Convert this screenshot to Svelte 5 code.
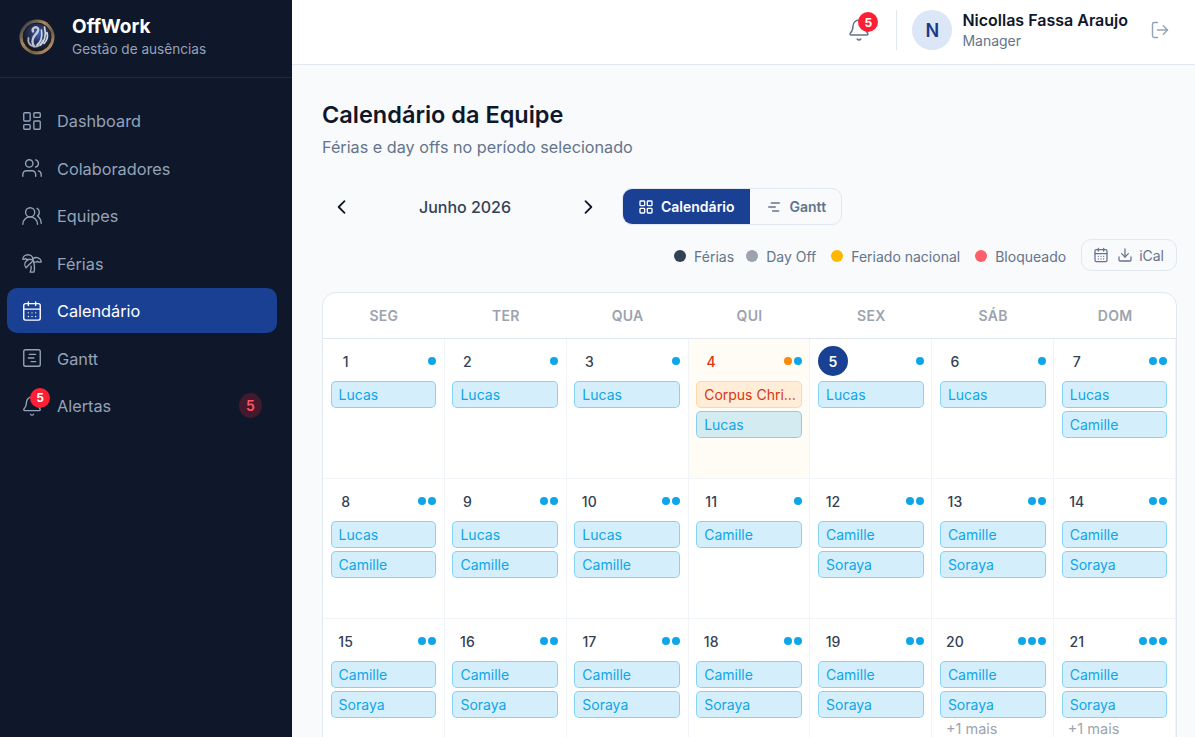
<script>
  const nav = [
    { k: 'grid', t: 'Dashboard' },
    { k: 'users', t: 'Colaboradores' },
    { k: 'team', t: 'Equipes' },
    { k: 'palm', t: 'Férias' },
    { k: 'cal', t: 'Calendário', active: true },
    { k: 'gantt', t: 'Gantt' },
    { k: 'bell', t: 'Alertas', badge: 5 }
  ];
  const heads = ['SEG', 'TER', 'QUA', 'QUI', 'SEX', 'SÁB', 'DOM'];
  const L = 'Lucas', C = 'Camille', S = 'Soraya';
  const days = [
    { n: 1, p: [L] }, { n: 2, p: [L] }, { n: 3, p: [L] },
    { n: 4, p: [L], holiday: 'Corpus Christi' },
    { n: 5, p: [L], today: true }, { n: 6, p: [L] }, { n: 7, p: [L, C] },
    { n: 8, p: [L, C] }, { n: 9, p: [L, C] }, { n: 10, p: [L, C] }, { n: 11, p: [C] },
    { n: 12, p: [C, S] }, { n: 13, p: [C, S] }, { n: 14, p: [C, S] },
    { n: 15, p: [C, S] }, { n: 16, p: [C, S] }, { n: 17, p: [C, S] }, { n: 18, p: [C, S] },
    { n: 19, p: [C, S] }, { n: 20, p: [C, S], more: 1 }, { n: 21, p: [C, S], more: 1 }
  ];
</script>

{#snippet icon(k)}
  <svg class="ic" viewBox="0 0 24 24" fill="none" stroke="currentColor" stroke-linecap="round" stroke-linejoin="round">
    {#if k === 'grid'}
      <rect x="3" y="3" width="7" height="9" rx="1" /><rect x="14" y="3" width="7" height="5" rx="1" /><rect x="14" y="12" width="7" height="9" rx="1" /><rect x="3" y="16" width="7" height="5" rx="1" />
    {:else if k === 'grid4'}
      <rect x="3" y="3" width="7" height="7" rx="1" /><rect x="14" y="3" width="7" height="7" rx="1" /><rect x="14" y="14" width="7" height="7" rx="1" /><rect x="3" y="14" width="7" height="7" rx="1" />
    {:else if k === 'users'}
      <path d="M16 21v-2a4 4 0 0 0-4-4H6a4 4 0 0 0-4 4v2" /><circle cx="9" cy="7" r="4" /><path d="M22 21v-2a4 4 0 0 0-3-3.870" /><path d="M16 3.130a4 4 0 0 1 0 7.750" />
    {:else if k === 'team'}
      <path d="M18 21a8 8 0 0 0-16 0" /><circle cx="10" cy="8" r="5" /><path d="M22 20c0-3.370-2-6.500-4-8a5 5 0 0 0-.450-8.300" />
    {:else if k === 'palm'}
      <path d="M13 8c0-2.760-2.460-5-5.500-5S2 5.240 2 8h2l1-1 1 1h4" /><path d="M13 7.140A5.820 5.820 0 0 1 16.500 6c3.040 0 5.500 2.240 5.500 5h-3l-1-1-1 1h-3" /><path d="M5.890 9.710c-2.150 2.150-2.300 5.470-.350 7.430l4.240-4.250.700-.700.710-.710 2.120-2.120c-1.950-1.960-5.270-1.800-7.420.350" /><path d="M11 15.500c.500 2.500-.170 4.500-1 6.500h4c2-5.500-.500-12-1-14" />
    {:else if k === 'cal'}
      <path d="M8 2v4M16 2v4" /><rect x="3" y="4" width="18" height="18" rx="2" /><path d="M3 10h18" /><path d="M8 14h.010M12 14h.010M16 14h.010M8 18h.010M12 18h.010M16 18h.010" />
    {:else if k === 'gantt'}
      <rect x="3" y="3" width="18" height="18" rx="2" /><path d="M9 8h7M8 12h6M11 16h5" />
    {:else if k === 'bell'}
      <path d="M10.268 21a2 2 0 0 0 3.464 0" /><path d="M3.262 15.326A1 1 0 0 0 4 17h16a1 1 0 0 0 .740-1.673C19.410 13.956 18 12.499 18 8A6 6 0 0 0 6 8c0 4.499-1.411 5.956-2.738 7.326" />
    {:else if k === 'logout'}
      <path d="M16 17l5-5-5-5" /><path d="M21 12H9" /><path d="M9 21H5a2 2 0 0 1-2-2V5a2 2 0 0 1 2-2h4" />
    {:else if k === 'lines'}
      <path d="M8 6h12M4 12h10M10 18h9" />
    {:else if k === 'download'}
      <path d="M12 15V3" /><path d="M21 15v4a2 2 0 0 1-2 2H5a2 2 0 0 1-2-2v-4" /><path d="M7 10l5 5 5-5" />
    {/if}
  </svg>
{/snippet}

<div class="app">
  <aside class="side">
    <div class="brand">
      <svg class="logo" viewBox="0 0 36 36">
        <defs>
          <radialGradient id="lg" cx="55%" cy="38%" r="58%">
            <stop offset="0" stop-color="#3a5cc0" /><stop offset="0.5" stop-color="#25355f" /><stop offset="1" stop-color="#17181f" />
          </radialGradient>
          <linearGradient id="rg" x1="0.1" y1="0.2" x2="0.8" y2="0.9">
            <stop offset="0" stop-color="#45464c" /><stop offset="0.35" stop-color="#a88a60" /><stop offset="0.7" stop-color="#6f5c46" /><stop offset="1" stop-color="#b3905f" />
          </linearGradient>
          <filter id="soft" x="-10%" y="-10%" width="120%" height="120%"><feGaussianBlur stdDeviation="0.500" /></filter>
        </defs>
        <g filter="url(#soft)">
          <circle cx="18" cy="18" r="17.500" fill="url(#rg)" />
          <circle cx="18" cy="18" r="14" fill="url(#lg)" stroke="#1c1a1c" />
          <path d="M14 12.500c-1.500-3.500 3-5.500 5-3 1.500 2.500-2 5-4 8-2 3-2 7 0 9.500" fill="none" stroke="#c4c8d4" stroke-width="2.400" stroke-linecap="round" />
          <path d="M9.500 19c-1 4 1 8 5.500 8.500 4 .5 7.500-2 8.500-6" fill="none" stroke="#aeb3c4" stroke-width="1.800" stroke-linecap="round" />
          <path d="M18 26c4-3 5.500-8 4.500-15M21.500 26c4-3 6-10 4-18M25 24.500c3-3 4-7 3-11" fill="none" stroke="#d4d7e0" stroke-width="1.700" stroke-linecap="round" />
        </g>
      </svg>
      <div>
        <div class="bname">OffWork</div>
        <div class="bsub">Gestão de ausências</div>
      </div>
    </div>
    <nav class="nav">
      {#each nav as n}
        <div class="item" class:active={n.active}>
          <span class="icw">
            {@render icon(n.k)}
            {#if n.badge}<span class="dot-badge">{n.badge}</span>{/if}
          </span>
          <span class="lbl">{n.t}</span>
          {#if n.badge}<span class="pill-badge">{n.badge}</span>{/if}
        </div>
      {/each}
    </nav>
  </aside>

  <div class="main">
    <header class="top">
      <span class="icw hbell">
        {@render icon('bell')}
        <span class="dot-badge">5</span>
      </span>
      <span class="vr"></span>
      <span class="avatar">N</span>
      <div class="who">
        <div class="uname">Nicollas Fassa Araujo</div>
        <div class="urole">Manager</div>
      </div>
      <span class="logout">{@render icon('logout')}</span>
    </header>

    <main class="content">
      <h1>Calendário da Equipe</h1>
      <p class="sub">Férias e day offs no período selecionado</p>

      <div class="bar">
        <button class="arrow" aria-label="Anterior">
          <svg viewBox="0 0 24 24" fill="none" stroke="currentColor" stroke-width="2.200" stroke-linecap="round" stroke-linejoin="round"><path d="M15 5l-7 7 7 7" /></svg>
        </button>
        <span class="month">Junho 2026</span>
        <button class="arrow" aria-label="Próximo">
          <svg viewBox="0 0 24 24" fill="none" stroke="currentColor" stroke-width="2.200" stroke-linecap="round" stroke-linejoin="round"><path d="M9 5l7 7-7 7" /></svg>
        </button>
        <div class="seg">
          <span class="segb on">{@render icon('grid4')}Calendário</span>
          <span class="segb">{@render icon('lines')}Gantt</span>
        </div>
      </div>

      <div class="legend">
        <span class="lg"><i style="background:#334155"></i>Férias</span>
        <span class="lg"><i style="background:#9ca3af"></i>Day Off</span>
        <span class="lg"><i style="background:#ffb703"></i>Feriado nacional</span>
        <span class="lg"><i style="background:#ff5f6d"></i>Bloqueado</span>
        <span class="ical">{@render icon('cal')}{@render icon('download')}<b>iCal</b></span>
      </div>

      <div class="cal">
        <div class="head">
          {#each heads as h}<div class="hc">{h}</div>{/each}
        </div>
        <div class="gridc">
          {#each days as d}
            <div class="cell" class:hol={d.holiday}>
              <div class="dh">
                <span class="num" class:today={d.today} class:red={d.holiday}>{d.n}</span>
                <span class="dots">
                  {#if d.holiday}<i class="o"></i>{/if}
                  {#each d.p as _}<i></i>{/each}
                  {#if d.more}<i></i>{/if}
                </span>
              </div>
              {#if d.holiday}<div class="ev ho">{d.holiday}</div>{/if}
              {#each d.p as x}<div class="ev">{x}</div>{/each}
              {#if d.more}<div class="more">+{d.more} mais</div>{/if}
            </div>
          {/each}
        </div>
      </div>
    </main>
  </div>
</div>

<style>
  :global(body) { margin: 0; font-family: Inter, "Noto Sans", sans-serif; background: #f8fafc; }
  .app { display: flex; height: 737px; overflow: hidden; }
  .ic { width: 22px; height: 22px; display: block; flex: none; stroke-width: 1.500; }

  .side { width: 292px; flex: none; background: #0f172a; color: #94a3b8; }
  .brand { height: 73px; padding: 0 0 4px 19px; border-bottom: 1px solid #1e293b; display: flex; align-items: center; gap: 17px; }
  .logo { width: 36px; height: 36px; flex: none; }
  .bname { font-size: 19px; font-weight: 700; color: #fff; line-height: 24px; }
  .bsub { font-size: 13.600px; color: #94a3b8; line-height: 20px; }
  .nav { padding: 20px 15px 0 7px; display: flex; flex-direction: column; gap: 2.500px; }
  .item { height: 45px; display: flex; align-items: center; padding: 0 15px 0 14px; border-radius: 10px; font-size: 16.300px; gap: 14px; }
  .item.active { background: #1a4094; color: #fff; }
  .lbl { flex: 1; padding-top: 1px; }
  .icw { position: relative; display: block; }
  .dot-badge { position: absolute; top: -7px; left: 9px; width: 20px; height: 20px; border-radius: 50%; background: #ff1f35; color: #fff; font-size: 12px; font-weight: 700; display: flex; align-items: center; justify-content: center; }
  .pill-badge { width: 23px; height: 25px; border-radius: 50%; background: #45192c; color: #ff5565; font-size: 14px; font-weight: 600; display: flex; align-items: center; justify-content: center; }

  .main { flex: 1; min-width: 0; display: flex; flex-direction: column; }
  .top { height: 60px; padding: 0 25px 4px 0; flex: none; background: #fff; border-bottom: 1px solid #e2e8f0; display: flex; align-items: center; justify-content: flex-end; }
  .hbell { color: #64748b; margin-right: 25px; }
  .hbell .ic { width: 24px; height: 24px; }
  .hbell .dot-badge { top: -6px; left: 11px; }
  .vr { width: 1px; height: 40px; background: #e2e8f0; margin-right: 15px; }
  .avatar { width: 40px; height: 40px; border-radius: 50%; background: #dbe6f6; color: #1a3a86; font-size: 18px; font-weight: 600; display: flex; align-items: center; justify-content: center; margin-right: 10px; }
  .uname { font-size: 16px; font-weight: 600; color: #0f172a; line-height: 22px; }
  .urole { font-size: 14px; color: #64748b; line-height: 19px; }
  .who { margin-right: 22px; padding-bottom: 2px; }
  .logout { color: #94a3b8; }
  .logout .ic { width: 20px; height: 20px; stroke-width: 1.700; }

  .content { flex: 1; min-height: 0; padding: 34px 18px 0 30px; }
  h1 { margin: 0; font-size: 23.500px; font-weight: 600; color: #0f172a; line-height: 32px; }
  .sub { margin: 4px 0 0; font-size: 16.200px; color: #64748b; line-height: 24px; }

  .bar { display: flex; align-items: center; margin-top: 29px; height: 37px; }
  .arrow { width: 40px; height: 37px; padding: 0; background: none; border: 0; color: #0f172a; display: flex; align-items: center; justify-content: center; }
  .arrow svg { width: 20px; height: 20px; }
  .month { width: 206px; text-align: center; font-size: 16px; font-weight: 500; color: #334155; }
  .seg { display: flex; margin-left: 14px; height: 37px; border: 1px solid #e2e8f0; border-radius: 10px; overflow: hidden; box-sizing: border-box; }
  .segb { display: flex; align-items: center; gap: 8px; padding: 0 15px 0 16px; font-size: 14px; font-weight: 600; color: #64748b; }
  .segb .ic { width: 16px; height: 16px; stroke-width: 2; }
  .segb.on { background: #1a4094; color: #fff; gap: 7px; padding-left: 15px; }

  .legend { display: flex; align-items: center; justify-content: flex-end; margin-top: 14px; height: 32px; font-size: 14px; color: #64748b; }
  .lg { display: flex; align-items: center; gap: 8px; margin-right: 15px; padding-top: 2px; }
  .lg:first-child { margin-right: 12px; }
  .lg i { width: 12px; height: 12px; border-radius: 50%; display: block; }
  .ical { display: flex; align-items: center; gap: 8px; height: 32px; box-sizing: border-box; padding: 0 12px 0 11px; border: 1px solid #e2e8f0; border-radius: 10px; }
  .ical .ic { width: 16px; height: 16px; stroke-width: 1.900; }
  .ical b { font-weight: 400; margin-left: -2px; }

  .cal { margin-top: 21px; background: #fff; border: 1px solid #e2e8f0; border-radius: 14px 14px 0 0; }
  .head { display: grid; grid-template-columns: repeat(7, 1fr); height: 45px; border-bottom: 1px solid #e2e8f0; }
  .hc { display: flex; align-items: center; justify-content: center; font-size: 14px; font-weight: 600; color: #9ca3af; letter-spacing: 0.300px; }
  .gridc { display: grid; grid-template-columns: repeat(7, 1fr); grid-auto-rows: 140px; }
  .cell { box-sizing: border-box; border-right: 1px solid #f1f5f9; border-bottom: 1px solid #f1f5f9; padding: 7px 7.600px 0; min-width: 0; }
  .cell.hol { background: #fffbf5; }
  .dh { display: flex; align-items: center; justify-content: space-between; height: 30px; margin-bottom: 5px; }
  .num { width: 30px; height: 30px; border-radius: 50%; display: flex; align-items: center; justify-content: center; font-size: 14px; font-weight: 500; color: #334155; }
  .num.today { background: #1a4094; color: #fff; font-weight: 600; }
  .num.red { color: #d9340f; }
  .dots { display: flex; gap: 2px; }
  .dots i { width: 8px; height: 8px; border-radius: 50%; background: #0ea5e9; display: block; }
  .dots i.o { background: #f98b0a; }
  .ev { height: 27px; box-sizing: border-box; border: 1px solid rgba(14, 165, 233, 0.4); border-radius: 5px; background: rgba(14, 165, 233, 0.18); color: #0ea5e9; font-size: 14px; line-height: 26px; padding: 0 7px; margin-bottom: 3px; white-space: nowrap; overflow: hidden; text-overflow: ellipsis; }
  .ev.ho { background: #ffedd8; border-color: #fdd8a8; color: #d9340f; padding-right: 3px; }
  .more { font-size: 14.500px; color: #9ca3af; padding-left: 6px; margin-top: 1px; line-height: 16px; }
</style>
